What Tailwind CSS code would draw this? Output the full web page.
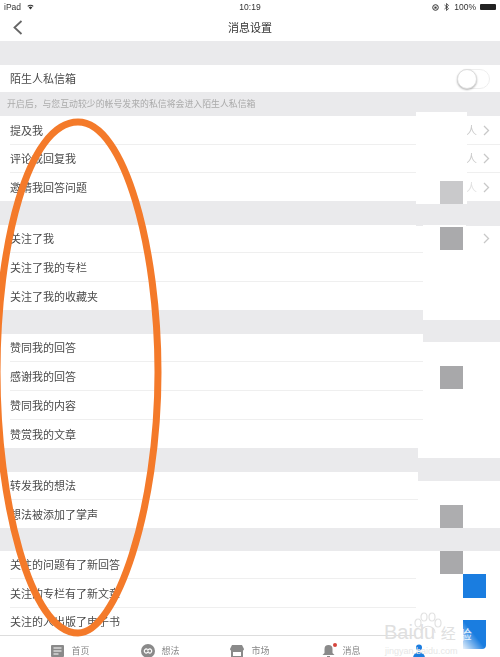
<!DOCTYPE html>
<html lang="zh-CN">
<head>
  <meta charset="UTF-8" />
  <title>消息设置</title>
  <script src="https://cdn.jsdelivr.net/npm/@tailwindcss/browser@4"></script>
</head>
<body class="m-0 bg-white">
<div class="relative w-[500px] h-[657px] overflow-hidden bg-white font-['Noto_Sans_CJK_SC','Liberation_Sans',sans-serif] text-[11px] text-[#4a4a4a]">
  <div class="flex flex-col h-[657px] blur-[0.3px]">
    <!-- Status bar -->
    <div class="h-[14px] grid grid-cols-3 items-center px-[4px] text-[8.5px] text-[#333] font-['Liberation_Sans',sans-serif]">
      <div class="flex items-center gap-[6px]">
        <span>iPad</span>
        <svg width="7" height="6" viewBox="0 0 9 7"><path d="M0.5 2.2a5.6 5.6 0 0 1 8 0L7.5 3.3a4.2 4.2 0 0 0-6 0zM2.2 4a3.2 3.2 0 0 1 4.6 0L4.5 6.6z" fill="#333"/></svg>
      </div>
      <div class="text-center">10:19</div>
      <div class="flex items-center justify-end gap-[4px]">
        <svg width="7" height="7" viewBox="0 0 7 7"><circle cx="3.5" cy="3.5" r="2.8" fill="none" stroke="#333" stroke-width="1"/><rect x="2.4" y="2.6" width="2.2" height="2" fill="#333"/></svg>
        <svg class="mx-[1px]" width="5" height="8" viewBox="0 0 5 8"><path d="M0.5 2l4 3.6-2 1.9V0.5l2 1.9-4 3.6" fill="none" stroke="#333" stroke-width="0.8"/></svg>
        <span>100%</span>
        <div class="w-[16px] h-[6px] bg-[#222] rounded-[1px]"></div>
      </div>
    </div>
    <!-- Nav -->
    <div class="h-[27px] flex items-center justify-center relative">
      <svg class="absolute left-[12px] top-[6px]" width="11" height="15" viewBox="0 0 11 15"><path d="M9.5 1L2.5 7.5L9.5 14" fill="none" stroke="#666" stroke-width="1.8"/></svg>
      <span class="text-[#333]">消息设置</span>
    </div>
    <div class="h-[24px] bg-[#eaeaec]"></div>
    <div class="h-[27px] flex items-center justify-between pl-[10px] pr-[10px]">
      <span>陌生人私信箱</span>
      <div class="relative w-[33px] h-[20px] rounded-full border border-[#eee] bg-white">
        <div class="absolute left-[-1px] top-[-1px] w-[20px] h-[20px] rounded-full bg-white border border-[#ddd] shadow-[0_1px_2px_rgba(0,0,0,0.3)]"></div>
      </div>
    </div>
    <div class="h-[24px] bg-[#eaeaec] flex items-center pl-[7px] text-[8.9px] text-[#aaa]">开启后，与您互动较少的帐号发来的私信将会进入陌生人私信箱</div>

    <div class="h-[29px] flex items-center justify-between ml-[10px] pr-[10px] border-b border-[#efefef]">
      <span>提及我</span>
      <span class="flex items-center gap-[6px] text-[#ccc]">人
        <svg width="7" height="11" viewBox="0 0 7 11"><path d="M1 1l4.5 4.5L1 10" fill="none" stroke="#c8c8c8" stroke-width="1.3"/></svg>
      </span>
    </div>
    <div class="h-[28px] flex items-center justify-between ml-[10px] pr-[10px] border-b border-[#efefef]">
      <span>评论或回复我</span>
      <span class="flex items-center gap-[6px] text-[#ccc]">人
        <svg width="7" height="11" viewBox="0 0 7 11"><path d="M1 1l4.5 4.5L1 10" fill="none" stroke="#c8c8c8" stroke-width="1.3"/></svg>
      </span>
    </div>
    <div class="h-[28px] flex items-center justify-between ml-[10px] pr-[10px]">
      <span>邀请我回答问题</span>
      <span class="flex items-center gap-[6px] text-[#e2e2e2]">人
        <svg width="7" height="11" viewBox="0 0 7 11"><path d="M1 1l4.5 4.5L1 10" fill="none" stroke="#c8c8c8" stroke-width="1.3"/></svg>
      </span>
    </div>
    <div class="h-[24px] bg-[#eaeaec]"></div>

    <div class="h-[28px] flex items-center justify-between ml-[10px] pr-[10px] border-b border-[#efefef]">
      <span>关注了我</span>
      <svg width="7" height="11" viewBox="0 0 7 11"><path d="M1 1l4.5 4.5L1 10" fill="none" stroke="#c8c8c8" stroke-width="1.3"/></svg>
    </div>
    <div class="h-[29px] flex items-center ml-[10px] border-b border-[#efefef]">关注了我的专栏</div>
    <div class="h-[28px] flex items-center ml-[10px]">关注了我的收藏夹</div>
    <div class="h-[24px] bg-[#eaeaec]"></div>

    <div class="h-[28px] flex items-center ml-[10px] border-b border-[#efefef]">赞同我的回答</div>
    <div class="h-[29px] flex items-center ml-[10px] border-b border-[#efefef]">感谢我的回答</div>
    <div class="h-[29px] flex items-center ml-[10px] border-b border-[#efefef]">赞同我的内容</div>
    <div class="h-[28px] flex items-center ml-[10px]">赞赏我的文章</div>
    <div class="h-[24px] bg-[#eaeaec]"></div>

    <div class="h-[28px] flex items-center ml-[10px] border-b border-[#efefef]">转发我的想法</div>
    <div class="h-[28px] flex items-center ml-[10px]">想法被添加了掌声</div>
    <div class="h-[23px] bg-[#eaeaec]"></div>

    <div class="h-[28px] flex items-center ml-[10px] border-b border-[#efefef]">关注的问题有了新回答</div>
    <div class="h-[29px] flex items-center ml-[10px] border-b border-[#efefef]">关注的专栏有了新文章</div>
    <div class="h-[27px] flex items-center ml-[10px]">关注的人出版了电子书</div>

    <!-- Tab bar -->
    <div class="h-[22px] border-t border-[#ddd] grid grid-cols-[repeat(5,90px)] pl-[25px] pt-[9px] text-[9px] leading-[12px] text-[#888]">
      <div class="flex h-[12px] items-center justify-center gap-[7px]">
        <svg class="ml-[1px]" width="13" height="12" viewBox="0 0 13 12"><rect width="13" height="12" rx="1" fill="#8a8a8a"/><path d="M2.5 3h8M2.5 6h8M2.5 9h5" stroke="#fff" stroke-width="1"/></svg>
        <span>首页</span>
      </div>
      <div class="flex h-[12px] items-center justify-center gap-[6px]">
        <svg class="ml-[1px]" width="14" height="14" viewBox="0 0 14 14"><circle cx="7" cy="7" r="7" fill="#8a8a8a"/><path d="M6.5 5.4a2 2 0 1 0 0 3.2l1-1.2M7.5 8.6a2 2 0 1 0 0-3.2l-1 1.2" fill="none" stroke="#fff" stroke-width="1.2"/></svg>
        <span>想法</span>
      </div>
      <div class="flex h-[12px] items-center justify-center gap-[7px]">
        <svg width="14" height="13" viewBox="0 0 14 13"><path d="M2 0h10l2 4a2 2 0 0 1-1 1.6V13H1V5.6A2 2 0 0 1 0 4z" fill="#8a8a8a"/><rect x="3" y="7" width="8" height="4" fill="#fff"/></svg>
        <span>市场</span>
      </div>
      <div class="flex h-[12px] items-center justify-center gap-[7px] pl-[3px]">
        <span class="relative">
          <svg class="block" width="13" height="14" viewBox="0 0 13 14"><path d="M6.5 1a4 4 0 0 1 4 4v4l2 2H0.5l2-2V5a4 4 0 0 1 4-4z" fill="#8a8a8a"/><rect x="5" y="12" width="3" height="2" fill="#8a8a8a"/></svg>
          <span class="absolute right-[-2px] top-[-1px] w-[4px] h-[4px] rounded-full bg-[#d6453d]"></span>
        </span>
        <span>消息</span>
      </div>
      <div class="flex h-[12px] items-start pl-[28px] -mt-[1px]">
        <svg width="12" height="14" viewBox="0 0 12 14"><circle cx="6" cy="3.5" r="3" fill="#1a7de0"/><path d="M0 14a6 6 0 0 1 12 0z" fill="#1a7de0"/></svg>
      </div>
    </div>
  </div>

  <!-- Redaction patches and shifted tiles sitting over the screenshot -->
  <div class="absolute left-[416px] top-[112px] w-[51px] h-[92px] bg-white"></div>
  <div class="absolute left-[416px] top-[204px] w-[84px] h-[22px] bg-[#eaeaec]"></div>
  <div class="absolute left-[423px] top-[225px] w-[43px] h-[27px] bg-white"></div>
  <div class="absolute left-[423px] top-[252px] w-[77px] h-[68px] bg-white"></div>
  <div class="absolute left-[423px] top-[320px] w-[77px] h-[22px] bg-[#eaeaec]"></div>
  <div class="absolute left-[423px] top-[342px] w-[77px] h-[116px] bg-white"></div>
  <div class="absolute left-[418px] top-[448px] w-[82px] h-[10px] bg-white"></div>
  <div class="absolute left-[418px] top-[458px] w-[82px] h-[23px] bg-[#eaeaec]"></div>
  <div class="absolute left-[418px] top-[481px] w-[82px] h-[47px] bg-white"></div>
  <div class="absolute left-[416px] top-[551px] w-[84px] h-[85px] bg-white"></div>

  <div class="absolute left-[440px] top-[181px] w-[23px] h-[23px] bg-[#c9c9cb]"></div>
  <div class="absolute left-[440px] top-[227px] w-[23px] h-[23px] bg-[#aaaaac]"></div>
  <div class="absolute left-[440px] top-[366px] w-[23px] h-[23px] bg-[#a8a8aa]"></div>
  <div class="absolute left-[440px] top-[505px] w-[23px] h-[23px] bg-[#adadaf]"></div>
  <div class="absolute left-[440px] top-[551px] w-[23px] h-[23px] bg-[#a9a9ab]"></div>
  <div class="absolute left-[463px] top-[574px] w-[23px] h-[24px] bg-[#1a7de0]"></div>
  <div class="absolute left-[463px] top-[620px] w-[23px] h-[29px] bg-[#1a7de0] rounded-br-[4px] overflow-hidden">
    <div class="w-[23px] h-[29px] bg-linear-to-tr from-white/90 via-transparent to-transparent"></div>
  </div>

  <!-- Orange hand-drawn oval -->
  <svg class="absolute left-0 top-0 pointer-events-none" width="500" height="657" viewBox="0 0 500 657">
    <path d="M78 122C125 122 158 250 158 372C158 510 116 633 78 633C30 633 -3 500 -3 372C-3 245 28 122 78 122Z" fill="none" stroke="#f47a2a" stroke-width="7"/>
  </svg>

  <!-- Baidu watermark -->
  <svg class="absolute left-[413px] top-[612px]" width="30" height="22" viewBox="0 0 30 22"><g fill="none" stroke="#e2e2e2" stroke-width="1.2"><ellipse cx="5" cy="11" rx="3" ry="4"/><ellipse cx="11" cy="5" rx="3" ry="4"/><ellipse cx="19" cy="5" rx="3" ry="4"/><ellipse cx="25" cy="11" rx="3" ry="4"/><path d="M8 21c0-9 14-9 14 0"/></g></svg>
  <div class="absolute left-[384px] top-[622px] text-[20px] leading-[20px] whitespace-nowrap font-['Liberation_Sans','Noto_Sans_CJK_SC',sans-serif] text-[#e0e0e0]">Baidu <span class="text-[15px]">经</span><span class="ml-[3px] text-[13px] text-white/85">验</span></div>
  <div class="absolute left-[385px] top-[645px] text-[9px] leading-[12px] whitespace-nowrap font-['Liberation_Sans',sans-serif] text-[#e6e6e6]">jingyan.baidu.com</div>
</div>
</body>
</html>
